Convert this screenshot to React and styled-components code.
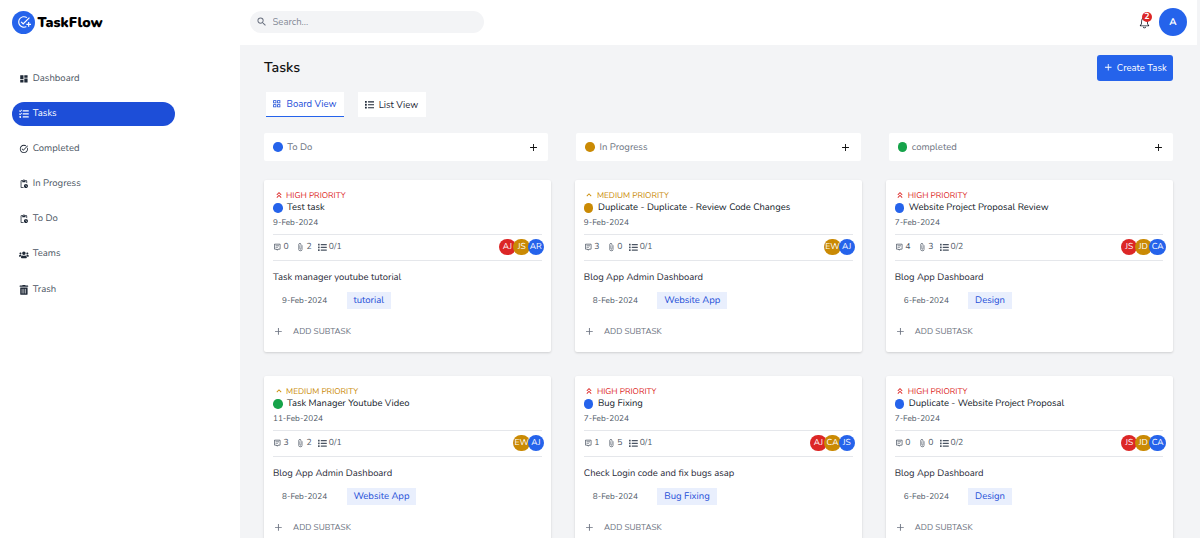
import React from "react";
import styled, { createGlobalStyle } from "styled-components";
import {
  MdDashboard, MdTaskAlt, MdOutlinePendingActions, MdOutlineAddTask, MdOutlineSearch,
  MdGridView, MdKeyboardDoubleArrowUp, MdKeyboardArrowUp, MdAttachFile,
} from "react-icons/md";
import { FaTasks, FaUsers, FaTrashAlt, FaList } from "react-icons/fa";
import { IoMdAdd, IoIosNotificationsOutline } from "react-icons/io";
import { BiMessageAltDetail } from "react-icons/bi";

const blue = "#2563eb";
const amber = "#ca8a04";
const green = "#16a34a";
const red = "#dc2626";

const GlobalStyle = createGlobalStyle`
  * { box-sizing: border-box; }
  body {
    margin: 0;
    overflow: hidden;
    background: #f3f4f6;
    color: #1f2937;
    font-family: Nunito, Lato, "Open Sans", sans-serif;
    text-rendering: geometricPrecision;
  }
  svg { display: block; flex: none; }
  button, input { font: inherit; letter-spacing: inherit; border: 0; padding: 0; margin: 0; }
`;

const Page = styled.div`
  display: flex;
  width: 100%;
  height: 538px;
  overflow: hidden;
`;

const Sidebar = styled.aside`
  flex: none;
  width: 240px;
  padding: 10px 12px;
  background: #fff;
`;

const Brand = styled.div`
  display: flex;
  align-items: center;
  gap: 2.6px;
  height: 24px;
  color: #000;
  font-size: 14.1px;
  font-weight: 900;
  line-height: 24px;
`;

const BrandName = styled.span`
  padding-top: 1px;
`;

const BrandMark = styled.span`
  display: grid;
  place-items: center;
  width: 23px;
  height: 23px;
  border-radius: 50%;
  background: ${blue};
  color: #fff;
  font-size: 14px;
`;

const Nav = styled.nav`
  display: flex;
  flex-direction: column;
  gap: 11.2px;
  margin-top: 32.5px;
`;

const NavItem = styled.a`
  display: flex;
  align-items: center;
  gap: 4.2px;
  width: 162.5px;
  height: 24px;
  padding-left: 6.8px;
  border-radius: 12px;
  background: ${(p) => (p.$active ? "#1d4ed8" : "transparent")};
  color: ${(p) => (p.$active ? "#fff" : "#4b5563")};
  font-size: 9.5px;
  line-height: 14px;
  svg { color: ${(p) => (p.$active ? "#fff" : "#1f2937")}; }
`;

const Workspace = styled.div`
  flex: 1;
  min-width: 0;
`;

const Header = styled.header`
  display: flex;
  align-items: center;
  justify-content: space-between;
  height: 45px;
  margin-right: 3.5px;
  padding: 0 9.5px;
  background: #fff;
`;

const SearchBox = styled.label`
  display: flex;
  align-items: center;
  gap: 5px;
  width: 234px;
  height: 22.5px;
  margin-top: -1px;
  padding: 0 0 1px 6.5px;
  border-radius: 12px;
  background: #f3f4f6;
  color: #6b7280;
  font-size: 9.5px;
`;

const SearchInput = styled.input`
  width: 180px;
  outline: none;
  background: transparent;
  &::placeholder { color: #858b97; }
`;

const HeaderActions = styled.div`
  display: flex;
  align-items: center;
  gap: 7px;
  margin-top: -1px;
`;

const Bell = styled.div`
  position: relative;
  color: #111827;
`;

const Badge = styled.span`
  position: absolute;
  top: -2.5px;
  right: 0px;
  width: 10px;
  height: 10px;
  border-radius: 50%;
  background: ${red};
  color: #fff;
  font-size: 8.8px;
  font-weight: 700;
  line-height: 11.4px;
  text-align: center;
`;

const Profile = styled.div`
  display: grid;
  place-items: center;
  width: 28px;
  height: 28px;
  border-radius: 50%;
  background: ${blue};
  color: #fff;
  font-size: 9.8px;
  font-weight: 700;
`;

const Main = styled.main`
  padding: 10px 27px 0 24px;
`;

const TitleRow = styled.div`
  display: flex;
  align-items: center;
  justify-content: space-between;
  height: 26px;
`;

const Title = styled.h1`
  margin: 0;
  padding-top: 2px;
  color: #111;
  font-size: 14.2px;
  font-weight: 600;
  line-height: 20px;
`;

const CreateButton = styled.button`
  display: flex;
  align-items: center;
  justify-content: center;
  gap: 3px;
  width: 76px;
  height: 25.5px;
  padding-bottom: 1px;
  border-radius: 3px;
  background: ${blue};
  color: #fff;
  font-size: 9.5px;
`;

const Tabs = styled.div`
  display: flex;
  gap: 14px;
  margin: 11px 0 16px 1.5px;
`;

const Tab = styled.button`
  display: flex;
  align-items: center;
  justify-content: center;
  gap: 4.5px;
  width: ${(p) => (p.$active ? 78 : 68)}px;
  height: 25px;
  padding-bottom: ${(p) => (p.$active ? 1 : 0)}px;
  background: #fff;
  color: ${(p) => (p.$active ? "#1d4ed8" : "#1f2937")};
  border-bottom: ${(p) => (p.$active ? `1px solid ${blue}` : "0")};
  font-size: 9.5px;
`;

const ColumnHeads = styled.div`
  display: grid;
  grid-template-columns: repeat(3, 1fr);
  gap: 28px;
`;

const ColumnHead = styled.div`
  display: flex;
  align-items: center;
  gap: 4.5px;
  height: 28px;
  padding: 0 9.5px 0 9.1px;
  border-radius: 2px;
  background: #fff;
  color: #6b7280;
  font-size: 9.5px;
  svg { margin-left: auto; color: #111; }
`;

const Dot = styled.span`
  flex: none;
  width: 9.6px;
  height: 9.6px;
  border-radius: 50%;
  background: ${(p) => p.$color};
`;

const Board = styled.section`
  display: grid;
  grid-template-columns: repeat(3, 1fr);
  gap: 24px 23.6px;
  margin-top: 19px;
`;

const Card = styled.article`
  height: 172px;
  padding: 9px 9.6px 0 9px;
  border-radius: 2px;
  background: #fff;
  box-shadow: 0 1px 3px rgba(0, 0, 0, 0.1), 0 1px 2px rgba(0, 0, 0, 0.06);
`;

const Priority = styled.div`
  display: flex;
  align-items: center;
  gap: 2.6px;
  height: 12px;
  padding-left: 0.5px;
  color: ${(p) => p.$color};
  font-size: 8.25px;
`;

const CardTitle = styled.h2`
  display: flex;
  align-items: center;
  gap: 4.5px;
  height: 14px;
  margin: 0;
  color: #111827;
  font-size: 9.4px;
  font-weight: 400;
`;

const CardDate = styled.div`
  height: 18.5px;
  color: #4b5563;
  font-size: 8.2px;
  line-height: 15px;
`;

const StatsRow = styled.div`
  display: flex;
  align-items: center;
  height: 27px;
  border-top: 1px solid #e5e7eb;
  border-bottom: 1px solid #e5e7eb;
  color: #4b5563;
`;

const Stat = styled.span`
  display: flex;
  align-items: center;
  gap: 2px;
  width: ${(p) => p.$width}px;
  padding-top: 0.5px;
  font-size: 8.6px;
`;

const People = styled.div`
  display: flex;
  margin: 0 -2.4px 0 auto;
`;

const Person = styled.span`
  display: flex;
  align-items: center;
  justify-content: center;
  width: 16.4px;
  height: 16.4px;
  margin-left: -2.2px;
  border-radius: 50%;
  background: ${(p) => p.$color};
  color: #fff;
  font-size: 8.6px;
`;

const SubtaskTitle = styled.h3`
  height: 12px;
  margin: 11px 0 8.8px;
  color: #1f2937;
  font-size: 9.42px;
  font-weight: 400;
  line-height: 12px;
`;

const SubtaskMeta = styled.div`
  display: flex;
  align-items: center;
  height: 17px;
  padding-left: 9px;
  color: #4b5563;
  font-size: 8.2px;
`;

const SubtaskDate = styled.span`
  width: 64.5px;
`;

const Tag = styled.span`
  height: 17px;
  padding: 0 6.9px;
  background: #e9effd;
  color: #1d4ed8;
  font-size: 9.5px;
  line-height: 17px;
`;

const AddSubtask = styled.button`
  display: flex;
  align-items: center;
  gap: 9.3px;
  height: 12px;
  margin-top: 16.4px;
  background: transparent;
  color: #6b7280;
  font-size: 8.3px;
`;

const navItems = [
  ["Dashboard", MdDashboard],
  ["Tasks", FaTasks],
  ["Completed", MdTaskAlt],
  ["In Progress", MdOutlinePendingActions],
  ["To Do", MdOutlinePendingActions],
  ["Teams", FaUsers],
  ["Trash", FaTrashAlt],
];

const columns = [
  ["To Do", blue],
  ["In Progress", amber],
  ["completed", green],
];

const avatarColors = [red, amber, blue];

const tasks = [
  { high: true, dot: blue, title: "Test task", date: "9-Feb-2024", stats: ["0", "2", "0/1"], team: ["AJ", "JS", "AR"], sub: "Task manager youtube tutorial", subDate: "9-Feb-2024", tag: "tutorial" },
  { high: false, dot: amber, title: "Duplicate - Duplicate - Review Code Changes", date: "9-Feb-2024", stats: ["3", "0", "0/1"], team: ["EW", "AJ"], sub: "Blog App Admin Dashboard", subDate: "8-Feb-2024", tag: "Website App" },
  { high: true, dot: blue, title: "Website Project Proposal Review", date: "7-Feb-2024", stats: ["4", "3", "0/2"], team: ["JS", "JD", "CA"], sub: "Blog App Dashboard", subDate: "6-Feb-2024", tag: "Design" },
  { high: false, dot: green, title: "Task Manager Youtube Video", date: "11-Feb-2024", stats: ["3", "2", "0/1"], team: ["EW", "AJ"], sub: "Blog App Admin Dashboard", subDate: "8-Feb-2024", tag: "Website App" },
  { high: true, dot: blue, title: "Bug Fixing", date: "7-Feb-2024", stats: ["1", "5", "0/1"], team: ["AJ", "CA", "JS"], sub: "Check Login code and fix bugs asap", subDate: "8-Feb-2024", tag: "Bug Fixing" },
  { high: true, dot: blue, title: "Duplicate - Website Project Proposal", date: "7-Feb-2024", stats: ["0", "0", "0/2"], team: ["JS", "JD", "CA"], sub: "Blog App Dashboard", subDate: "6-Feb-2024", tag: "Design" },
];

function TaskCard({ task }) {
  const Arrow = task.high ? MdKeyboardDoubleArrowUp : MdKeyboardArrowUp;
  const colors = avatarColors.slice(avatarColors.length - task.team.length);
  return (
    <Card>
      <Priority $color={task.high ? red : amber}>
        <Arrow size={10} />
        {task.high ? "HIGH PRIORITY" : "MEDIUM PRIORITY"}
      </Priority>
      <CardTitle><Dot $color={task.dot} />{task.title}</CardTitle>
      <CardDate>{task.date}</CardDate>
      <StatsRow>
        <Stat $width={23}><BiMessageAltDetail size={8.5} />{task.stats[0]}</Stat>
        <Stat $width={22}><MdAttachFile size={8.5} />{task.stats[1]}</Stat>
        <Stat $width={30}><FaList size={8.8} />{task.stats[2]}</Stat>
        <People>
          {task.team.map((name, i) => <Person key={name} $color={colors[i]}>{name}</Person>)}
        </People>
      </StatsRow>
      <SubtaskTitle>{task.sub}</SubtaskTitle>
      <SubtaskMeta>
        <SubtaskDate>{task.subDate}</SubtaskDate>
        <Tag>{task.tag}</Tag>
      </SubtaskMeta>
      <AddSubtask><IoMdAdd size={10.8} />ADD SUBTASK</AddSubtask>
    </Card>
  );
}

export default function App() {
  return (
    <>
      <GlobalStyle />
      <Page>
        <Sidebar>
          <Brand>
            <BrandMark><MdOutlineAddTask /></BrandMark>
            <BrandName>TaskFlow</BrandName>
          </Brand>
          <Nav>
            {navItems.map(([label, Icon]) => (
              <NavItem key={label} $active={label === "Tasks"}><Icon size={9.8} />{label}</NavItem>
            ))}
          </Nav>
        </Sidebar>
        <Workspace>
          <Header>
            <SearchBox>
              <MdOutlineSearch size={11.5} />
              <SearchInput placeholder="Search..." />
            </SearchBox>
            <HeaderActions>
              <Bell><IoIosNotificationsOutline size={15} /><Badge>2</Badge></Bell>
              <Profile>A</Profile>
            </HeaderActions>
          </Header>
          <Main>
            <TitleRow>
              <Title>Tasks</Title>
              <CreateButton><IoMdAdd size={10.5} />Create Task</CreateButton>
            </TitleRow>
            <Tabs>
              <Tab $active><MdGridView size={9.5} />Board View</Tab>
              <Tab><FaList size={9.5} />List View</Tab>
            </Tabs>
            <ColumnHeads>
              {columns.map(([label, color]) => (
                <ColumnHead key={label}><Dot $color={color} />{label}<IoMdAdd size={11} /></ColumnHead>
              ))}
            </ColumnHeads>
            <Board>
              {tasks.map((task) => <TaskCard key={task.title} task={task} />)}
            </Board>
          </Main>
        </Workspace>
      </Page>
    </>
  );
}
